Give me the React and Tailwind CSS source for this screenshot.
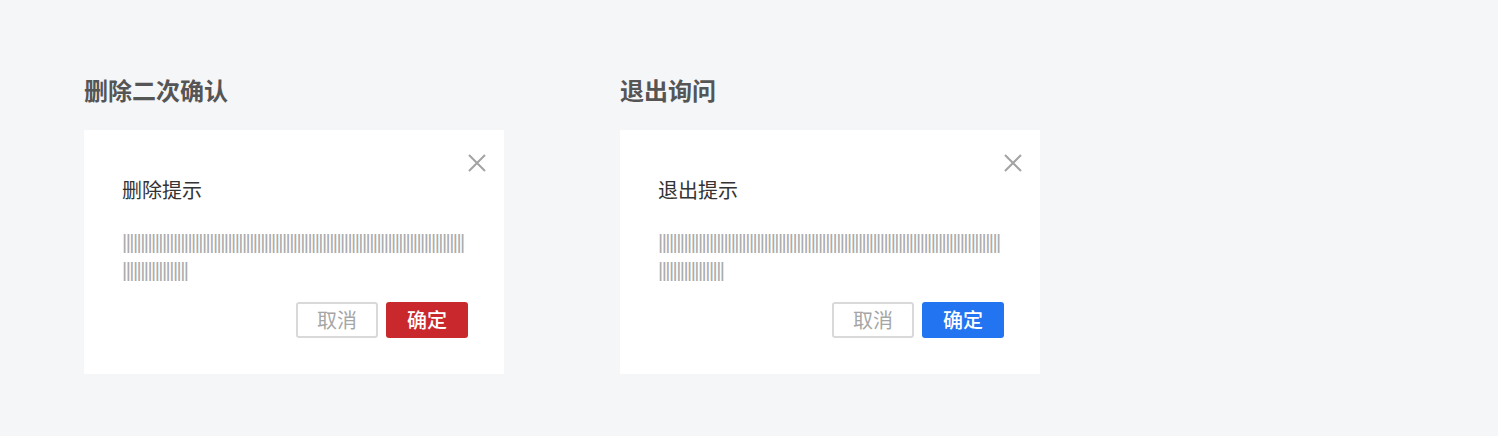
import React from "react";

const PIPES = "|".repeat(112);

function CloseIcon() {
  return (
    <svg width="20" height="20" viewBox="0 0 20 20" fill="none" stroke="#a3a3a3" strokeWidth="2" strokeLinecap="butt">
      <path d="M2 2 L18 18 M18 2 L2 18" />
    </svg>
  );
}

function Dialog({ title, confirmClass }) {
  return (
    <div className="relative w-[420px] bg-white pl-[38px] pr-[36px] pt-[48px] pb-[36px]">
      <div className="absolute right-[17px] top-[23px]">
        <CloseIcon />
      </div>
      <div className="text-[20px] leading-[24px] text-[#333333]">{title}</div>
      <div
        className="mt-[26px] mr-[3px] break-all text-[20px] leading-[28px] tracking-[-1.56px] text-[#acacac]"
        style={{ fontFamily: '"Liberation Sans", Arial, sans-serif' }}
      >
        {PIPES}
      </div>
      <div className="mt-[18px] flex justify-end gap-[8px]">
        <button className="h-[36px] w-[82px] rounded-[3px] border-2 border-[#d9d9d9] bg-white text-[20px] leading-none text-[#a6a6a6]">
          取消
        </button>
        <button className={`h-[36px] w-[82px] rounded-[3px] text-[20px] font-medium leading-none text-white ${confirmClass}`}>
          确定
        </button>
      </div>
    </div>
  );
}

export default function App() {
  return (
    <div
      className="min-h-screen bg-[#f5f6f8] pl-[84px] pt-[74px]"
      style={{ fontFamily: '"Noto Sans CJK SC", "Noto Sans", sans-serif' }}
    >
      <div className="flex gap-[116px]">
        <div className="flex w-[420px] flex-col">
          <div className="text-[24px] font-bold leading-[32px] text-[#555555]">删除二次确认</div>
          <div className="mt-[24px]">
            <Dialog title="删除提示" confirmClass="bg-[#c9292d]" />
          </div>
        </div>
        <div className="flex w-[420px] flex-col">
          <div className="text-[24px] font-bold leading-[32px] text-[#555555]">退出询问</div>
          <div className="mt-[24px]">
            <Dialog title="退出提示" confirmClass="bg-[#2274f0]" />
          </div>
        </div>
      </div>
    </div>
  );
}
